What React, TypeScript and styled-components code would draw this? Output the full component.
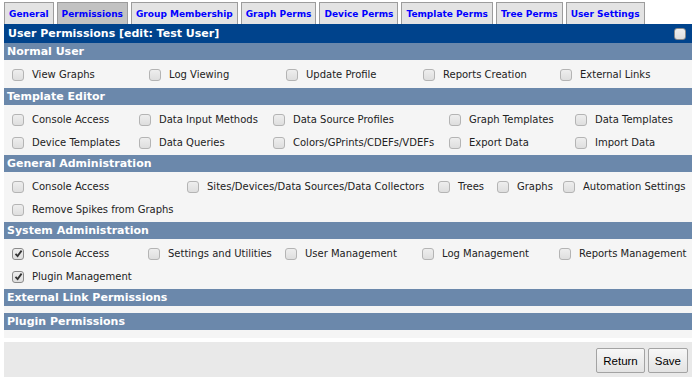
import styled, { createGlobalStyle } from 'styled-components';

interface Perm {
  label: string;
  checked?: boolean;
}

interface Section {
  title: string;
  cols?: string;
  items: Perm[];
}

const GlobalStyle = createGlobalStyle`
  html, body {
    margin: 0;
    padding: 0;
    background: #ffffff;
  }
  body {
    font-family: "DejaVu Sans", Verdana, sans-serif;
    color: #222;
  }
`;

const Page = styled.div`
  padding: 2px 3px 0 4px;
`;

const TabBar = styled.div`
  display: flex;
  gap: 3px;
  height: 22px;
`;

const Tab = styled.div<{ $active?: boolean }>`
  display: flex;
  align-items: center;
  padding: 0 4px;
  border: 1px solid #9c9c9c;
  border-bottom: none;
  background: ${(p) => (p.$active ? '#c2c2c2' : '#e3e3e3')};
  color: #0000ff;
  font-weight: bold;
  font-size: 9px;
  white-space: nowrap;
`;

const TitleBar = styled.div`
  display: flex;
  align-items: center;
  justify-content: space-between;
  height: 19px;
  padding: 0 6px 0 4px;
  background: #00438c;
  color: #ffffff;
  font-weight: bold;
  font-size: 11px;
`;

const SectionHeader = styled.div`
  height: 17px;
  line-height: 17px;
  padding-left: 3px;
  background: #6b88ab;
  color: #ffffff;
  font-weight: bold;
  font-size: 11px;
  white-space: nowrap;
`;

// one-row sections get a little more room underneath
const PermGrid = styled.div<{ $cols: string; $oneRow: boolean }>`
  display: grid;
  grid-template-columns: ${(p) => p.$cols};
  grid-auto-rows: 23px;
  padding: 3px 0 ${(p) => (p.$oneRow ? 2 : 1)}px;
  background: #f5f5f5;
`;

const Spacer = styled.div<{ $h: number }>`
  height: ${(p) => p.$h}px;
  background: #f5f5f5;
`;

const PermItem = styled.label`
  display: flex;
  align-items: center;
  gap: 8px;
  padding-left: 8px;
  font-size: 10px;
  white-space: nowrap;
  color: #222;
`;

const Box = styled.span<{ $dark?: boolean }>`
  display: inline-flex;
  align-items: center;
  justify-content: center;
  box-sizing: border-box;
  width: 12px;
  height: 12px;
  flex: none;
  border: 1px solid ${(p) => (p.$dark ? '#8a8a8a' : '#b4b4b4')};
  border-radius: 3px;
  background: linear-gradient(#eeeeee, #dedede);
`;

const Footer = styled.div`
  display: flex;
  justify-content: flex-end;
  gap: 3px;
  margin-top: 4px;
  padding: 6px 4px 6px;
  background: #e9e9e9;
`;

const Button = styled.button`
  height: 25px;
  padding: 0 6px;
  border: 1px solid #a3a3a3;
  border-radius: 2px;
  background: linear-gradient(#f7f7f7, #e3e3e3);
  font-family: "Liberation Sans", Arial, sans-serif;
  font-size: 11.5px;
  color: #000;
`;

const tabs = [
  'General',
  'Permissions',
  'Group Membership',
  'Graph Perms',
  'Device Perms',
  'Template Perms',
  'Tree Perms',
  'User Settings',
];

const sections: Section[] = [
  {
    title: 'Normal User',
    cols: '137px 137px 137px 137px 1fr',
    items: [
      { label: 'View Graphs' },
      { label: 'Log Viewing' },
      { label: 'Update Profile' },
      { label: 'Reports Creation' },
      { label: 'External Links' },
    ],
  },
  {
    title: 'Template Editor',
    cols: '127px 134px 176px 126px 1fr',
    items: [
      { label: 'Console Access' },
      { label: 'Data Input Methods' },
      { label: 'Data Source Profiles' },
      { label: 'Graph Templates' },
      { label: 'Data Templates' },
      { label: 'Device Templates' },
      { label: 'Data Queries' },
      { label: 'Colors/GPrints/CDEFs/VDEFs' },
      { label: 'Export Data' },
      { label: 'Import Data' },
    ],
  },
  {
    title: 'General Administration',
    cols: '175px 251px 59px 66px 1fr',
    items: [
      { label: 'Console Access' },
      { label: 'Sites/Devices/Data Sources/Data Collectors' },
      { label: 'Trees' },
      { label: 'Graphs' },
      { label: 'Automation Settings' },
      { label: 'Remove Spikes from Graphs' },
    ],
  },
  {
    title: 'System Administration',
    cols: '136px 137px 137px 137px 1fr',
    items: [
      { label: 'Console Access', checked: true },
      { label: 'Settings and Utilities' },
      { label: 'User Management' },
      { label: 'Log Management' },
      { label: 'Reports Management' },
      { label: 'Plugin Management', checked: true },
    ],
  },
  { title: 'External Link Permissions', items: [] },
  { title: 'Plugin Permissions', items: [] },
];

function CheckBox({ checked, dark }: { checked?: boolean; dark?: boolean }) {
  return (
    <Box $dark={dark || checked}>
      {checked && (
        <svg width="9" height="9" viewBox="0 0 9 9">
          <path d="M1.5 4.8 L3.6 7 L7.6 1.6" fill="none" stroke="#333" strokeWidth="1.8" />
        </svg>
      )}
    </Box>
  );
}

export default function App() {
  return (
    <>
      <GlobalStyle />
      <Page>
        <TabBar>
          {tabs.map((t) => (
            <Tab key={t} $active={t === 'Permissions'}>
              {t}
            </Tab>
          ))}
        </TabBar>
        <TitleBar>
          <span>User Permissions [edit: Test User]</span>
          <CheckBox dark />
        </TitleBar>
        {sections.map((s, i) => (
          <div key={s.title}>
            <SectionHeader>{s.title}</SectionHeader>
            {s.items.length > 0 ? (
              <PermGrid $cols={s.cols || '1fr'} $oneRow={s.items.length <= 5}>
                {s.items.map((p) => (
                  <PermItem key={p.label}>
                    <CheckBox checked={p.checked} />
                    {p.label}
                  </PermItem>
                ))}
              </PermGrid>
            ) : (
              <Spacer $h={i === sections.length - 1 ? 8 : 7} />
            )}
          </div>
        ))}
        <Footer>
          <Button>Return</Button>
          <Button>Save</Button>
        </Footer>
      </Page>
    </>
  );
}
